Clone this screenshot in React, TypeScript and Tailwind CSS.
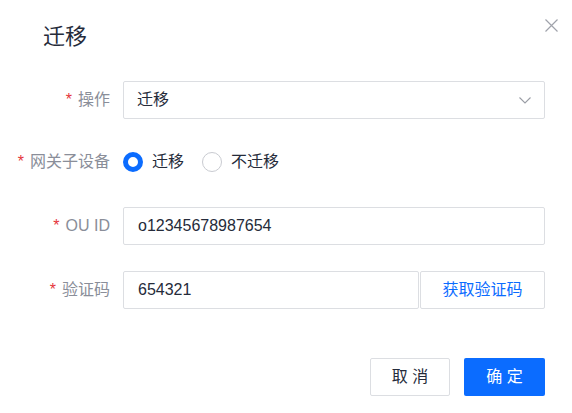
import React from 'react';

const Label: React.FC<{ text: string }> = ({ text }) => (
  <div className="w-[123px] shrink-0 pr-[13px] text-right text-[16px] text-[#8a8e99] whitespace-nowrap">
    <span className="text-[#e5353b] mr-[6px]">*</span>
    {text}
  </div>
);

const Radio: React.FC<{ checked?: boolean; label: string }> = ({ checked, label }) => (
  <label className="flex items-center gap-[9px] cursor-pointer">
    <span
      className={
        checked
          ? 'w-[20px] h-[20px] rounded-full border-[5px] border-[#0b6cff] bg-white'
          : 'w-[20px] h-[20px] rounded-full border border-[#c9cbd1] bg-white'
      }
    />
    <span className="text-[16px] text-[#252b3a]">{label}</span>
  </label>
);

export default function App() {
  return (
    <div
      className="w-[572px] h-[413px] bg-white overflow-hidden"
      style={{ fontFamily: '"Liberation Sans", "Noto Sans CJK SC", sans-serif' }}
    >
      <div className="flex justify-between items-start pl-[43px] pr-[14px] pt-[19px]">
        <h1 className="mt-[3px] text-[22px] leading-[30px] text-[#252b3a]">迁移</h1>
        <button className="w-[13px] h-[13px] text-[#a0a3ab]">
          <svg width="13" height="13" viewBox="0 0 13 13" fill="none" stroke="currentColor" strokeWidth="1.2">
            <path d="M0.5 0.5 L12.5 12.5 M12.5 0.5 L0.5 12.5" />
          </svg>
        </button>
      </div>

      <div className="mt-[29px] flex flex-col">
        <div className="flex items-center h-[38px]">
          <Label text="操作" />
          <div className="w-[422px] h-[38px] border border-[#dcdee2] rounded-[2px] flex items-center justify-between pl-[13px] pr-[13px]">
            <span className="text-[16px] text-[#252b3a]">迁移</span>
            <svg width="12" height="7" viewBox="0 0 12 7" fill="none" stroke="#9a9da5" strokeWidth="1.1">
              <path d="M0.5 0.5 L6 6 L11.5 0.5" />
            </svg>
          </div>
        </div>

        <div className="flex items-center h-[38px] mt-[24px]">
          <Label text="网关子设备" />
          <div className="flex items-center gap-[18px]">
            <Radio checked label="迁移" />
            <Radio label="不迁移" />
          </div>
        </div>

        <div className="flex items-center h-[38px] mt-[26px]">
          <Label text="OU ID" />
          <div className="w-[422px] h-[38px] border border-[#dcdee2] rounded-[2px] flex items-center px-[14px]">
            <span className="text-[16px] text-[#252b3a]">o12345678987654</span>
          </div>
        </div>

        <div className="flex items-center h-[38px] mt-[26px]">
          <Label text="验证码" />
          <div className="w-[296px] h-[38px] border border-[#dcdee2] rounded-[2px] flex items-center px-[14px]">
            <span className="text-[16px] text-[#252b3a]">654321</span>
          </div>
          <button className="ml-[1px] w-[125px] h-[38px] border border-[#dcdee2] rounded-[2px] text-[16px] text-[#0b6cff] bg-white">
            获取验证码
          </button>
        </div>
      </div>

      <div className="mt-[49px] flex justify-end gap-[14px] pr-[27px]">
        <button className="w-[80px] h-[38px] border border-[#dcdee2] rounded-[2px] bg-white text-[16px] text-[#252b3a]">
          取 消
        </button>
        <button className="w-[81px] h-[38px] rounded-[2px] bg-[#0b6cff] text-[16px] text-white">
          确 定
        </button>
      </div>
    </div>
  );
}
